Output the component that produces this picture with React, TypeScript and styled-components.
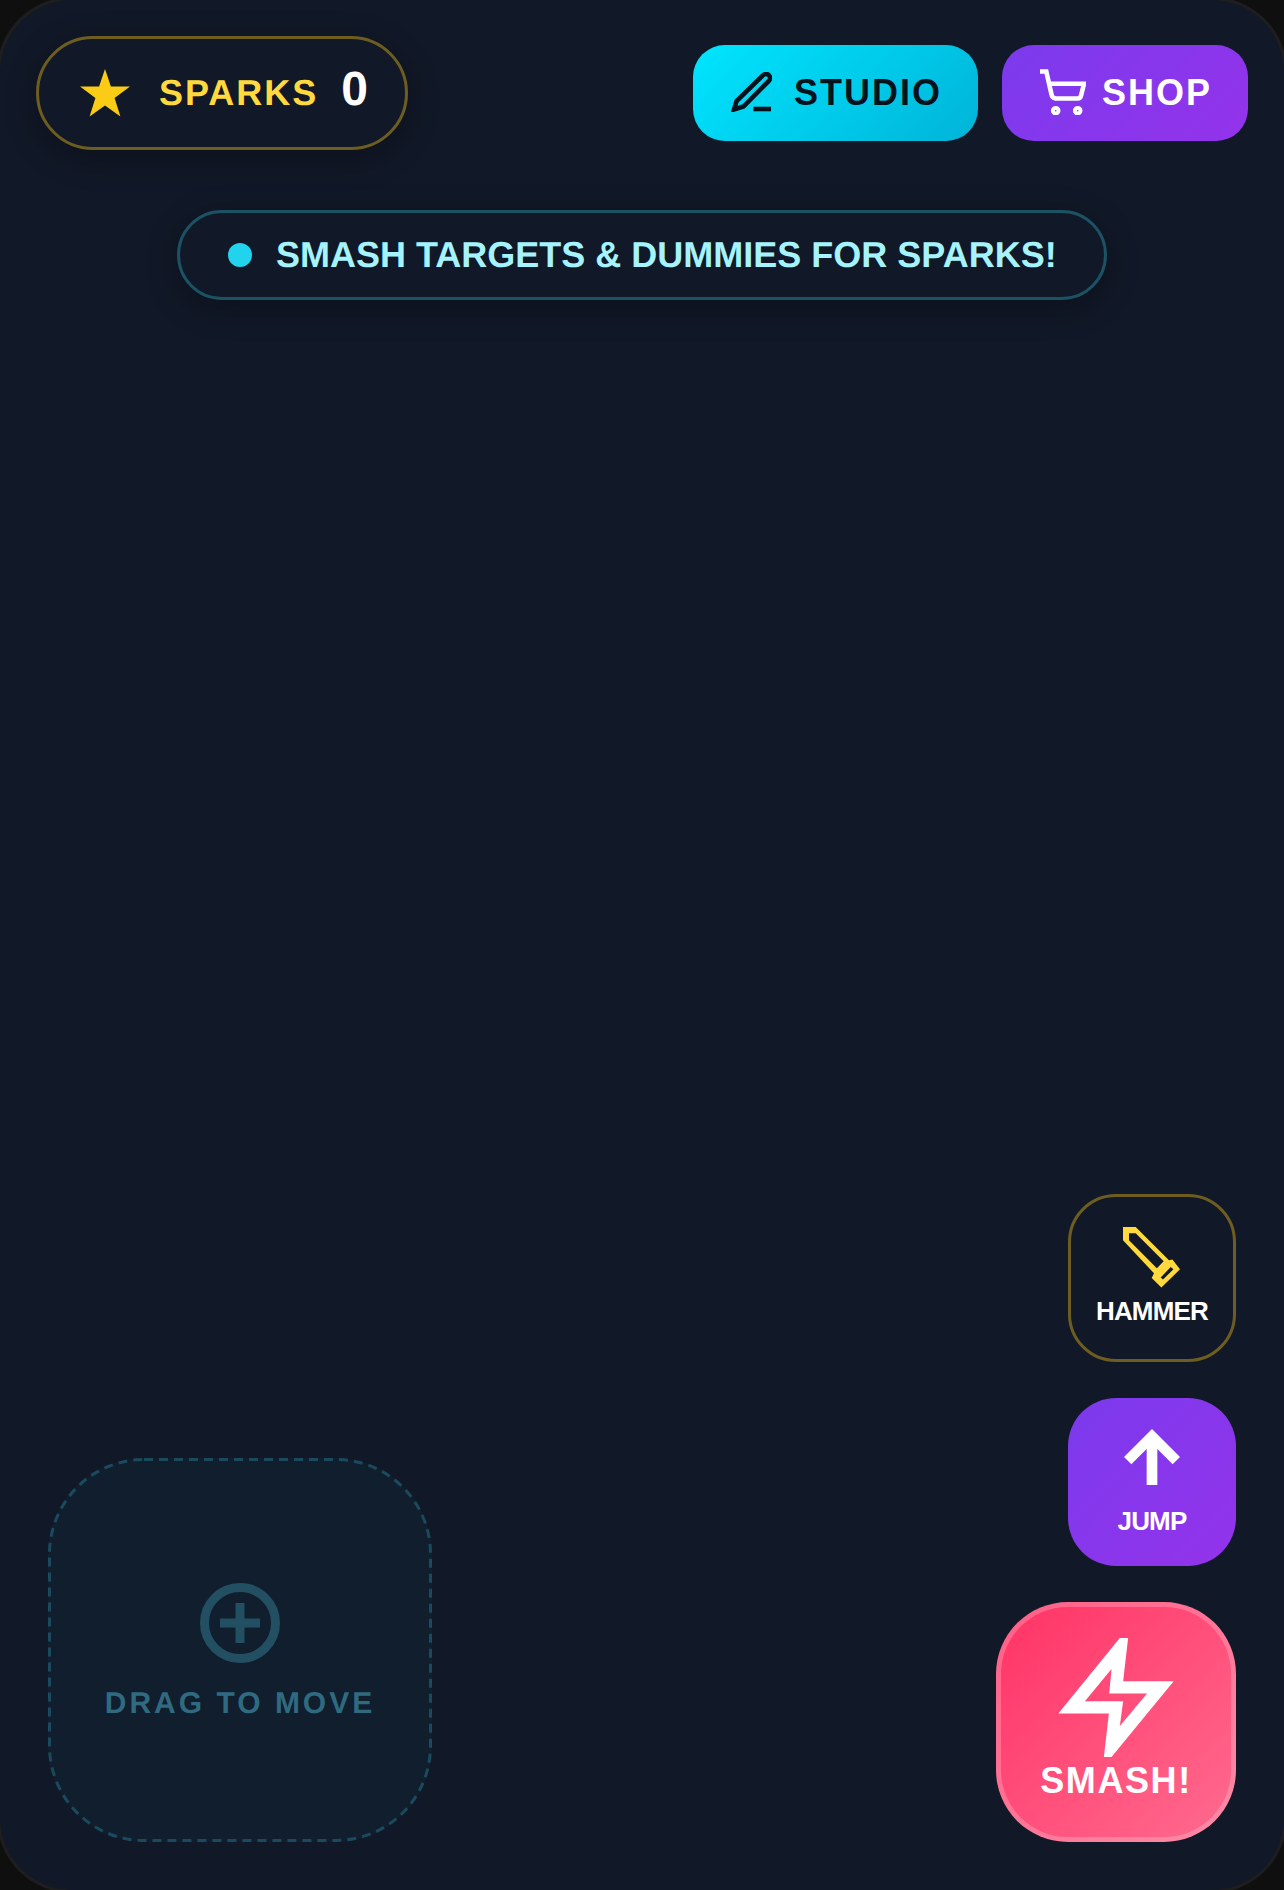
import React from 'react';
import styled, { createGlobalStyle } from 'styled-components';

const GlobalStyle = createGlobalStyle`
  html, body {
    margin: 0;
    padding: 0;
    background: #0f0f0f;
    overflow: hidden;
  }
  * {
    box-sizing: border-box;
  }
  body {
    font-family: "Liberation Sans", Arial, sans-serif;
    text-rendering: geometricPrecision;
  }
`;

const Frame = styled.div`
  width: 1284px;
  height: 1890px;
  border-radius: 72px;
  box-shadow: 0 0 0 3px #1e1e1e;
  background: #111827;
  padding: 36px 36px 48px 36px;
  display: flex;
  flex-direction: column;
  justify-content: space-between;
`;

const Top = styled.div`
  display: flex;
  flex-direction: column;
  gap: 60px;
`;

const TopBar = styled.div`
  display: flex;
  align-items: center;
  justify-content: space-between;
`;

const Counter = styled.div`
  width: 372px;
  height: 114px;
  border: 3px solid #6e5d20;
  border-radius: 57px;
  background: #111827;
  box-shadow: 0 8px 32px rgba(0, 0, 0, 0.3);
  display: flex;
  align-items: center;
  padding-left: 41px;
`;

const StarIcon = styled.svg`
  width: 50px;
  height: 48px;
  margin-right: 29px;
`;

const Score = styled.div`
  display: flex;
  align-items: baseline;
  gap: 23px;
  margin-bottom: 7px;
`;

const CounterLabel = styled.span`
  font-size: 36px;
  line-height: 1;
  font-weight: 700;
  letter-spacing: 2px;
  color: #ffd93d;
`;

const CounterValue = styled.span`
  font-size: 48px;
  line-height: 1;
  font-weight: 700;
  color: #ffffff;
`;

const Actions = styled.div`
  display: flex;
  gap: 24px;
`;

const ActionButton = styled.button<{ $variant: 'studio' | 'shop' }>`
  height: 96px;
  width: ${(p) => (p.$variant === 'studio' ? '285px' : '246px')};
  border: none;
  border-radius: 32px;
  display: flex;
  align-items: center;
  gap: ${(p) => (p.$variant === 'studio' ? '22px' : '16px')};
  padding: 0 0 0 38px;
  font-family: inherit;
  font-size: 36px;
  line-height: 1;
  font-weight: 700;
  letter-spacing: 2px;
  color: ${(p) => (p.$variant === 'studio' ? '#04121c' : '#ffffff')};
  background: ${(p) =>
    p.$variant === 'studio'
      ? 'linear-gradient(135deg, #00e5ff 0%, #00b4d8 100%)'
      : 'linear-gradient(135deg, #7c3aed 0%, #9333ea 100%)'};
  svg {
    margin-bottom: 2px;
  }
`;

const Notice = styled.div`
  align-self: center;
  width: 930px;
  height: 90px;
  border: 3px solid #1b5264;
  border-radius: 45px;
  background: #111827;
  box-shadow: 0 8px 32px rgba(0, 0, 0, 0.3);
  display: flex;
  align-items: center;
  padding-left: 48px;
  gap: 24px;
  font-size: 36px;
  font-weight: 700;
  color: #a5f3fc;
`;

const NoticeDot = styled.span`
  width: 24px;
  height: 24px;
  border-radius: 50%;
  background: #22d3ee;
`;

const Bottom = styled.div`
  display: flex;
  justify-content: space-between;
  align-items: flex-end;
  padding: 0 12px;
`;

const DragPad = styled.div`
  position: relative;
  width: 384px;
  height: 384px;
  border-radius: 96px;
  background: #101e2d;
  display: flex;
  flex-direction: column;
  align-items: center;
  justify-content: center;
  gap: 26px;
  padding-top: 2px;
  font-size: 30px;
  line-height: 1;
  font-weight: 700;
  letter-spacing: 3px;
  color: #2f6a80;
`;

const DashedOutline = styled.svg`
  position: absolute;
  inset: 0;
  width: 384px;
  height: 384px;
`;

const Controls = styled.div`
  display: flex;
  flex-direction: column;
  align-items: flex-end;
  gap: 36px;
`;

const SmallControl = styled.button<{ $variant: 'hammer' | 'jump' }>`
  width: 168px;
  height: 168px;
  border-radius: 48px;
  border: ${(p) => (p.$variant === 'hammer' ? '3px solid #6e5d20' : 'none')};
  background: ${(p) =>
    p.$variant === 'hammer'
      ? '#111827'
      : 'linear-gradient(135deg, #7c3aed 0%, #9333ea 100%)'};
  display: flex;
  flex-direction: column;
  align-items: center;
  gap: ${(p) => (p.$variant === 'hammer' ? '10px' : '23px')};
  padding: ${(p) => (p.$variant === 'hammer' ? '30px' : '31px')} 0 0 0;
  color: #ffffff;
  font-family: inherit;
  font-size: 26px;
  line-height: 1;
  font-weight: 700;
  letter-spacing: -0.8px;
`;

const HammerIcon = styled.svg`
  width: 57px;
  height: 61px;
  margin-right: 2px;
`;

const SmashControl = styled.button`
  width: 240px;
  height: 240px;
  border-radius: 72px;
  border: 5px solid rgba(255, 255, 255, 0.22);
  background: linear-gradient(135deg, #ff3366 0%, #ff6b8f 100%) border-box;
  display: flex;
  flex-direction: column;
  align-items: center;
  gap: 6px;
  padding: 31px 0 0 0;
  color: #ffffff;
  font-family: inherit;
  font-size: 36px;
  line-height: 1;
  font-weight: 700;
  letter-spacing: 1.6px;
`;

const App = () => {
  return (
    <>
      <GlobalStyle />
      <Frame>
        <Top>
          <TopBar>
            <Counter>
              <StarIcon viewBox="0 0 50 48">
                <polygon
                  points="25,0 30.9,17.5 50,17.5 34.6,29 40.4,47.6 25,36.4 9.6,47.6 15.4,29 0,17.5 19.1,17.5"
                  fill="#facc15"
                />
              </StarIcon>
              <Score>
                <CounterLabel>SPARKS</CounterLabel>
                <CounterValue>0</CounterValue>
              </Score>
            </Counter>
            <Actions>
              <ActionButton $variant="studio">
                <svg width="41" height="40" viewBox="11 12 41 40" fill="none" stroke="currentColor" strokeWidth="4.6">
                  <path d="M14 49.5L16.6 41L43.1 15.2A4 4 0 0 1 48.9 20.8L23.5 46.5Z" />
                  <path d="M33.3 49H51" />
                </svg>
                STUDIO
              </ActionButton>
              <ActionButton $variant="shop">
                <svg width="46" height="46" viewBox="10 9 46 46" fill="none" stroke="currentColor" strokeWidth="4.6">
                  <path d="M10 11.5H16.3L21.4 34Q22 38 25.5 38.5H47.5Q50.6 38.5 51.2 35L54 23.7H18.5" />
                  <circle cx="25.7" cy="50.7" r="2.8" strokeWidth="4" />
                  <circle cx="47.7" cy="50.7" r="2.8" strokeWidth="4" />
                </svg>
                SHOP
              </ActionButton>
            </Actions>
          </TopBar>
          <Notice>
            <NoticeDot />
            SMASH TARGETS &amp; DUMMIES FOR SPARKS!
          </Notice>
        </Top>
        <Bottom>
          <DragPad>
            <DashedOutline viewBox="0 0 384 384" fill="none">
              <rect x="1.5" y="1.5" width="381" height="381" rx="94.5" stroke="#1b4a5e" strokeWidth="3" strokeDasharray="9 6" />
            </DashedOutline>
            <svg width="80" height="80" viewBox="0 0 80 80" fill="none" stroke="#234f62" strokeWidth="9">
              <circle cx="40" cy="40" r="35.5" />
              <path d="M40 20v40M20 40h40" />
            </svg>
            DRAG TO MOVE
          </DragPad>
          <Controls>
            <SmallControl $variant="hammer">
              <HammerIcon viewBox="12.3 6.7 57 61" fill="#ffd93d" fillRule="evenodd">
                <path d="M12.3 6.7H25L58.3 40L61.7 39.3L69.3 49L50.7 67.3L41 57.7L43.3 53L12.3 20ZM18.3 13V20L46.15 47.85L53 41L25 13ZM50 57.3L52.3 59.3L62.7 49L60 46.7Z" />
              </HammerIcon>
              HAMMER
            </SmallControl>
            <SmallControl $variant="jump">
              <svg width="56" height="56" viewBox="252 148 168 168" fill="#ffffff">
                <polygon points="336,148 420,232 398,254 352,208 352,316 320,316 320,208 274,254 252,232" />
              </svg>
              JUMP
            </SmallControl>
            <SmashControl>
              <svg width="116" height="119" viewBox="235 145 347 358" fill="#ffffff" fillRule="evenodd">
                <path d="M420 145H445L430 275H582L395 503H372L387 372H235ZM395 238L388 312H502L420 410L430 335H315Z" />
              </svg>
              SMASH!
            </SmashControl>
          </Controls>
        </Bottom>
      </Frame>
    </>
  );
};

export default App;
